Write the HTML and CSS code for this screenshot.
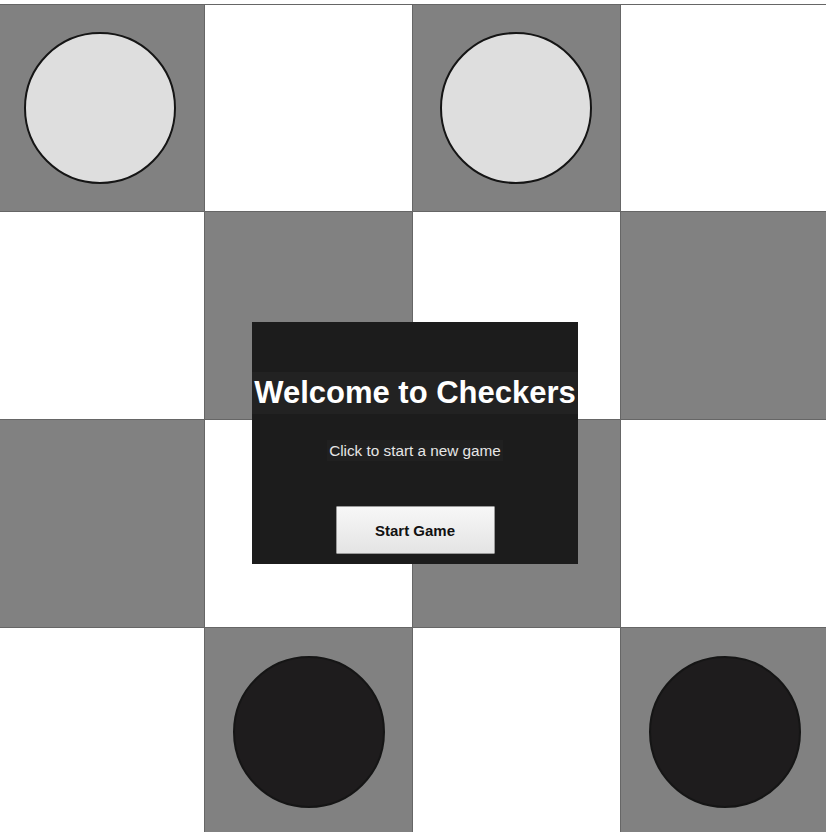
FILE: index.html
```html
<!DOCTYPE html>
<html>
<head>
<meta charset="utf-8">
<link rel="stylesheet" href="styles.css">
</head>
<body>
<div class="stage">
  <div class="board">
    <div class="cell dark"><div class="piece light-piece"></div></div>
    <div class="cell lightc"></div>
    <div class="cell dark"><div class="piece light-piece"></div></div>
    <div class="cell lightc"></div>

    <div class="cell lightc"></div>
    <div class="cell dark"></div>
    <div class="cell lightc"></div>
    <div class="cell dark"></div>

    <div class="cell dark"></div>
    <div class="cell lightc"></div>
    <div class="cell dark"></div>
    <div class="cell lightc"></div>

    <div class="cell lightc"></div>
    <div class="cell dark"><div class="piece dark-piece"></div></div>
    <div class="cell lightc"></div>
    <div class="cell dark"><div class="piece dark-piece"></div></div>
  </div>
  <div class="modal">
    <h1 class="title">Welcome to Checkers</h1>
    <p class="subtitle">Click to start a new game</p>
    <button class="start">Start Game</button>
  </div>
</div>
</body>
</html>
```
FILE: styles.css
```css
html, body {
  margin: 0;
  padding: 0;
  background: #ffffff;
  overflow: hidden;
  font-family: "Liberation Sans", Arial, sans-serif;
}
.stage {
  position: relative;
  width: 826px;
  height: 832px;
  overflow: hidden;
}
.board {
  display: grid;
  grid-template-columns: repeat(4, 207px);
  grid-template-rows: 206px 207px 207px 207px;
  gap: 1px;
  padding: 1px;
  background: #666666;
  margin-left: -4px;
  margin-top: 4px;
  width: max-content;
}
.cell {
  display: flex;
  align-items: center;
  justify-content: center;
}
.dark { background: #818181; }
.lightc { background: #ffffff; }
.piece {
  width: 148px;
  height: 148px;
  border-radius: 50%;
  border: 2px solid #151515;
}
.light-piece { background: #dedede; margin-left: -2px; }
.dark-piece { background: #1e1c1d; }
.modal {
  position: absolute;
  left: 252px;
  top: 322px;
  width: 326px;
  height: 242px;
  box-sizing: border-box;
  background: #1c1c1c;
  display: flex;
  flex-direction: column;
  align-items: center;
  padding-top: 50px;
}
.title {
  margin: 0;
  width: 100%;
  text-align: center;
  font-size: 31px;
  line-height: 42px;
  font-weight: bold;
  color: #ffffff;
  background: #222222;
  white-space: nowrap;
}
.subtitle {
  margin: 26px 0 0;
  padding: 0 2px;
  font-size: 15.3px;
  line-height: 21px;
  color: #e6e6e6;
  background: #202020;
}
.start {
  margin-top: 45px;
  width: 159px;
  height: 48px;
  font-family: "Liberation Sans", Arial, sans-serif;
  font-size: 15px;
  font-weight: bold;
  color: #111111;
  background: linear-gradient(#f7f7f7, #e4e4e4);
  border: 1px solid #9a9a9a;
  border-radius: 1px;
}
```
